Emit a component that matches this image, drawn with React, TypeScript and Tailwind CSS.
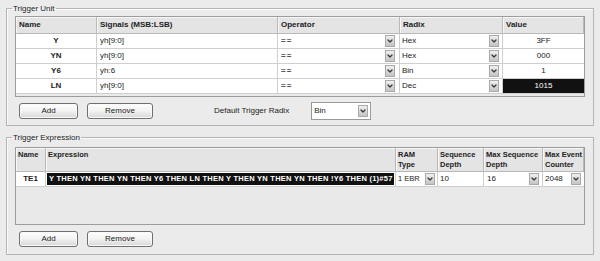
import { ChevronDown } from 'lucide-react'

// Trigger unit rows as shown in the signal table
const units = [
  { name: 'Y', signal: 'yh[9:0]', op: '==', radix: 'Hex', value: '3FF', selected: false },
  { name: 'YN', signal: 'yh[9:0]', op: '==', radix: 'Hex', value: '000', selected: false },
  { name: 'Y6', signal: 'yh:6', op: '==', radix: 'Bin', value: '1', selected: false },
  { name: 'LN', signal: 'yh[9:0]', op: '==', radix: 'Dec', value: '1015', selected: true },
]

const expression =
  'Y THEN YN THEN YN THEN Y6 THEN LN THEN Y THEN YN THEN YN THEN !Y6 THEN (1)#57'

function Arrow() {
  return (
    <span className="w-[10px] h-[12px] shrink-0 flex items-center justify-center border border-[#a9a9a9] bg-linear-to-b from-[#f0f0f0] to-[#c4c4c4]">
      <ChevronDown size={8} strokeWidth={4} className="text-[#3a3a3a]" />
    </span>
  )
}

function Button({ label, width }: { label: string; width: string }) {
  return (
    <button
      className={`${width} h-[16px] rounded-[3px] border border-[#6f6f6f] bg-linear-to-b from-white via-[#f2f2f2] to-[#d6d6d6] text-[8px] leading-none text-[#222] shadow-[inset_0_0_0_1px_#fafafa]`}
    >
      {label}
    </button>
  )
}

function Legend({ title }: { title: string }) {
  return (
    <legend className="ml-[5px] px-[1px] text-[8px] leading-[9px] text-[#222]">{title}</legend>
  )
}

export default function App() {
  return (
    <div className="w-[600px] h-[261px] bg-[#ebebeb] px-[6px] pt-[4px] font-['Liberation_Sans',Arial,sans-serif] text-[#222] overflow-hidden">
      {/* Trigger Unit */}
      <fieldset className="w-[587px] h-[122px] border border-[#b4b4b4] shadow-[inset_1px_1px_0_#fafafa]">
        <Legend title="Trigger Unit" />
        <div className="px-[8px] pt-[3px]">
          <div className="w-[570px] h-[81px] border border-[#9c9c9c] bg-[#e9e9e9]">
            <div className="grid grid-cols-[81px_181px_122px_103px_81px] text-[8px] leading-none">
              {['Name', 'Signals (MSB:LSB)', 'Operator', 'Radix', 'Value'].map((h) => (
                <div
                  key={h}
                  className="h-[17px] flex items-center px-[3px] font-bold bg-[#e4e4e4] border-r border-b border-[#b9b9b9] shadow-[inset_1px_1px_0_#f8f8f8]"
                >
                  {h}
                </div>
              ))}
              {units.map((u) => (
                <div key={u.name} className="contents">
                  <div className="h-[15px] flex items-center justify-center bg-white border-r border-b border-[#cfcfcf] font-bold">
                    {u.name}
                  </div>
                  <div className="h-[15px] flex items-center px-[3px] bg-white border-r border-b border-[#cfcfcf]">
                    {u.signal}
                  </div>
                  <div className="h-[15px] flex items-center justify-between pl-[3px] pr-[4px] bg-white border-r border-b border-[#cfcfcf]">
                    <span className="font-bold tracking-[1px] text-[#555]">{u.op}</span>
                    <Arrow />
                  </div>
                  <div className="h-[15px] flex items-center justify-between pl-[2px] pr-[3px] bg-white border-r border-b border-[#cfcfcf]">
                    <span>{u.radix}</span>
                    <Arrow />
                  </div>
                  <div
                    className={`h-[15px] flex items-center justify-center border-b border-[#cfcfcf] ${
                      u.selected ? 'bg-[#111] text-white' : 'bg-white'
                    }`}
                  >
                    {u.value}
                  </div>
                </div>
              ))}
            </div>
          </div>

          <div className="flex items-center mt-[5px] pl-[4px]">
            <Button label="Add" width="w-[59px]" />
            <div className="w-[9px]" />
            <Button label="Remove" width="w-[66px]" />
            <span className="ml-[61px] text-[8px] leading-none">Default Trigger Radix</span>
            <div className="ml-[22px] w-[60px] h-[18px] flex items-center justify-between pl-[2px] pr-[2px] bg-white border border-[#9a9a9a] text-[8px]">
              <span>Bin</span>
              <Arrow />
            </div>
          </div>
        </div>
      </fieldset>

      {/* Trigger Expression */}
      <fieldset className="mt-[7px] w-[587px] h-[122px] border border-[#b4b4b4] shadow-[inset_1px_1px_0_#fafafa]">
        <Legend title="Trigger Expression" />
        <div className="px-[8px] pt-[5px]">
          <div className="w-[570px] h-[78px] border border-[#9c9c9c] bg-[#e9e9e9]">
            <div className="grid grid-cols-[30px_350px_42px_46px_59px_41px] text-[8px] leading-[10px]">
              {['Name', 'Expression', 'RAM\nType', 'Sequence\nDepth', 'Max Sequence\nDepth', 'Max Event\nCounter'].map((h) => (
                <div
                  key={h}
                  className="h-[24px] flex items-start pt-[2px] px-[2px] font-bold text-[7.5px] whitespace-pre overflow-hidden bg-[#e4e4e4] border-r border-b border-[#b9b9b9] shadow-[inset_1px_1px_0_#f8f8f8]"
                >
                  {h}
                </div>
              ))}
              <div className="h-[15px] flex items-center justify-center bg-white border-r border-b border-[#cfcfcf] font-bold">
                TE1
              </div>
              <div className="h-[15px] p-[1px] bg-white border-r border-b border-[#cfcfcf] overflow-hidden">
                <div className="h-full flex items-center px-[2px] bg-[#111] text-white font-bold text-[7.5px] tracking-[0.25px] whitespace-nowrap overflow-hidden">
                  {expression}
                </div>
              </div>
              <div className="h-[15px] flex items-center justify-between pl-[2px] pr-[2px] bg-white border-r border-b border-[#cfcfcf] text-[7.5px]">
                <span>1 EBR</span>
                <Arrow />
              </div>
              <div className="h-[15px] flex items-center px-[2px] bg-white border-r border-b border-[#cfcfcf]">
                10
              </div>
              <div className="h-[15px] flex items-center justify-between pl-[3px] pr-[3px] bg-white border-r border-b border-[#cfcfcf]">
                <span>16</span>
                <Arrow />
              </div>
              <div className="h-[15px] flex items-center justify-between pl-[2px] pr-[3px] bg-white border-b border-[#cfcfcf]">
                <span>2048</span>
                <Arrow />
              </div>
            </div>
          </div>

          <div className="flex items-center mt-[6px] pl-[4px]">
            <Button label="Add" width="w-[59px]" />
            <div className="w-[9px]" />
            <Button label="Remove" width="w-[66px]" />
          </div>
        </div>
      </fieldset>
    </div>
  )
}
